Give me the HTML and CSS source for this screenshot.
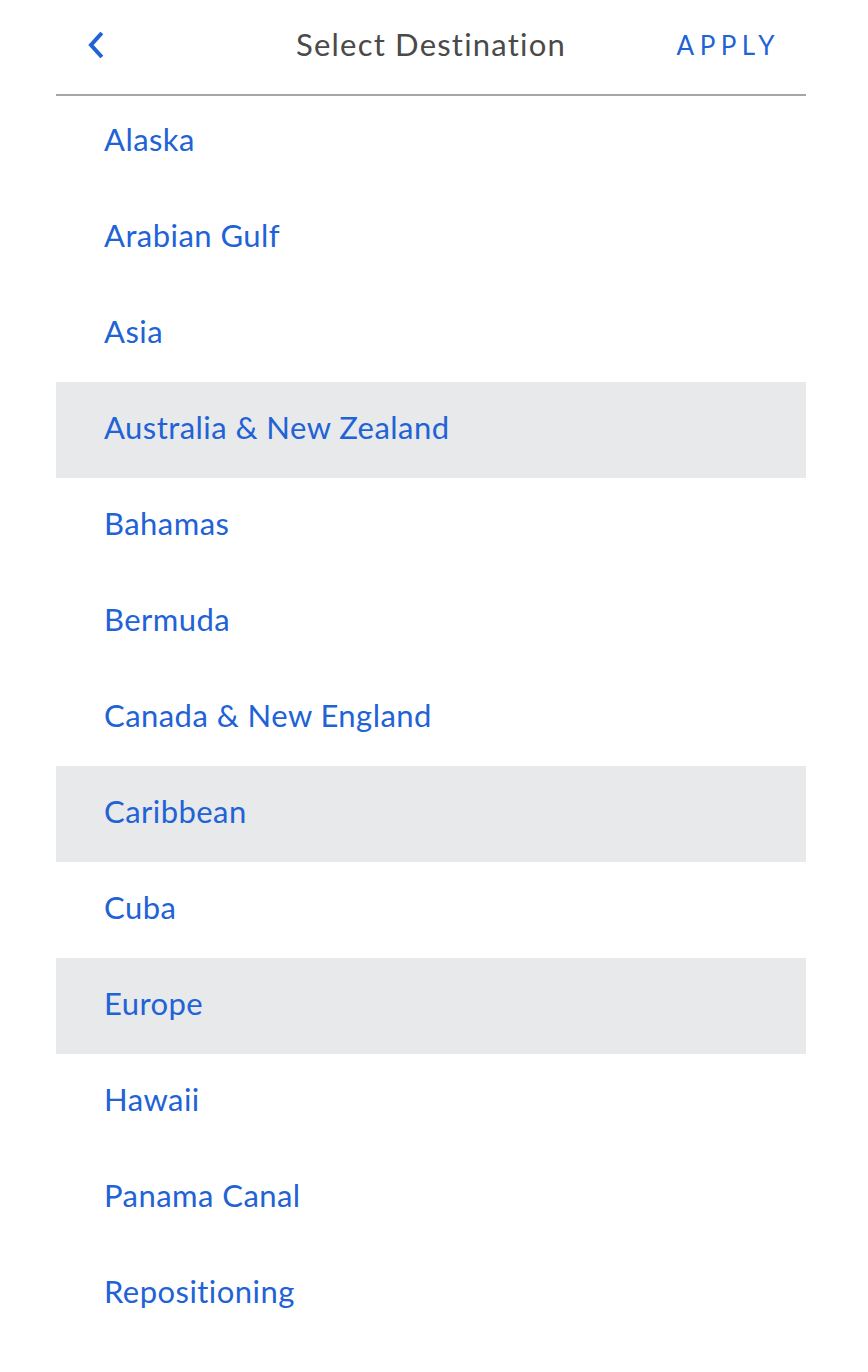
FILE: index.html
```html
<!DOCTYPE html>
<html lang="en">
<head>
<meta charset="utf-8">
<title>Select Destination</title>
<link rel="stylesheet" href="styles.css">
</head>
<body>
<div class="panel">
  <header class="header">
    <button class="back" aria-label="Back">
      <svg width="18" height="26" viewBox="0 0 18 26"><path d="M13.5 2.5 L4 13 L13.5 23.5" fill="none" stroke="#2162d6" stroke-width="4" stroke-linecap="square" stroke-linejoin="miter"/></svg>
    </button>
    <h1 class="title">Select Destination</h1>
    <button class="apply">APPLY</button>
  </header>
  <ul class="list">
    <li class="item">Alaska</li>
    <li class="item">Arabian Gulf</li>
    <li class="item">Asia</li>
    <li class="item selected">Australia &amp; New Zealand</li>
    <li class="item">Bahamas</li>
    <li class="item">Bermuda</li>
    <li class="item">Canada &amp; New England</li>
    <li class="item selected">Caribbean</li>
    <li class="item">Cuba</li>
    <li class="item selected">Europe</li>
    <li class="item">Hawaii</li>
    <li class="item">Panama Canal</li>
    <li class="item">Repositioning</li>
  </ul>
</div>
</body>
</html>
```
FILE: styles.css
```css
html, body {
  margin: 0;
  padding: 0;
  background: #ffffff;
}
body {
  font-family: Lato, "Noto Sans", sans-serif;
  overflow: hidden;
}
.panel {
  width: 750px;
  margin-left: 56px;
}
.header {
  position: relative;
  z-index: 1;
  height: 94px;
  border-bottom: 2px solid #a6a6a6;
  margin-bottom: -2px;
  display: flex;
  align-items: center;
  justify-content: space-between;
  padding: 0 26px 0 31px;
}
.back {
  background: none;
  border: 0;
  padding: 0;
  width: 18px;
  height: 26px;
  display: flex;
  margin-top: -4px;
}
.title {
  margin: 0;
  font-weight: 400;
  font-size: 31px;
  color: #4a4a4a;
  letter-spacing: 1.2px;
  position: absolute;
  left: 0;
  right: 0;
  text-align: center;
  pointer-events: none;
  top: 25px;
}
.apply {
  background: none;
  border: 0;
  padding: 0;
  font-family: inherit;
  font-size: 26px;
  letter-spacing: 5.5px;
  color: #2162d6;
  margin-top: -4px;
}
.list {
  list-style: none;
  margin: 0;
  padding: 0;
}
.item {
  height: 96px;
  display: flex;
  align-items: center;
  padding-left: 48px;
  padding-bottom: 6px;
  box-sizing: border-box;
  font-size: 31px;
  letter-spacing: 0.45px;
  color: #2162d6;
}
.item.selected {
  background: #e8e9eb;
}
```
